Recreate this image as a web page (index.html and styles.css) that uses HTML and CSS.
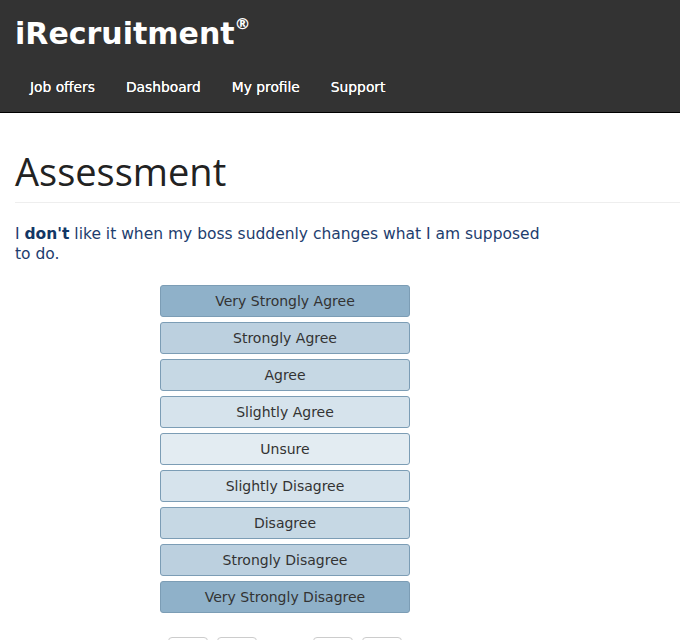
FILE: index.html
```html
<!DOCTYPE html>
<html lang="en">
<head>
  <meta charset="UTF-8">
  <title>iRecruitment - Assessment</title>
  <link rel="stylesheet" href="styles.css">
</head>
<body>
  <div class="header">
    <div class="brand">iRecruitment<sup>&reg;</sup></div>
    <ul class="nav">
      <li>Job offers</li>
      <li>Dashboard</li>
      <li>My profile</li>
      <li>Support</li>
    </ul>
  </div>

  <div class="content">
    <h1>Assessment</h1>

    <p class="question">I <b>don't</b> like it when my boss suddenly changes what I am supposed to do.</p>

    <div class="answers">
      <button class="lvl3">Very Strongly Agree</button>
      <button class="lvl2">Strongly Agree</button>
      <button class="lvl1">Agree</button>
      <button class="lvl0">Slightly Agree</button>
      <button class="mid">Unsure</button>
      <button class="lvl0">Slightly Disagree</button>
      <button class="lvl1">Disagree</button>
      <button class="lvl2">Strongly Disagree</button>
      <button class="lvl3">Very Strongly Disagree</button>
    </div>

    <div class="pager">
      <span class="box"></span>
      <span class="box"></span>
      <span class="space"></span>
      <span class="box"></span>
      <span class="box"></span>
    </div>
  </div>
</body>
</html>
```

FILE: styles.css
```css
body {
  margin: 0;
  font-family: 'DejaVu Sans', Verdana, sans-serif;
  background: #fff;
  color: #333;
}
.header {
  background-color: #333;
  border-bottom: 1px solid #000;
  height: 112px;
  padding: 0 15px;
}
.brand {
  color: #fff;
  font-size: 30px;
  font-weight: bold;
  padding-top: 16px;
  line-height: 36px;
}
.brand sup {
  font-size: 16px;
  vertical-align: top;
  line-height: 20px;
  position: relative;
  top: -2px;
}
.nav {
  list-style: none;
  margin: 0;
  padding: 0;
  display: flex;
  margin-top: 23px;
}
.nav li {
  color: #fff;
  font-size: 13.8px;
  padding: 4px 16px 4px 15px;
  line-height: 16px;
  text-shadow: 0 0 0.4px #fff;
}
.content {
  padding: 0 15px;
}
h1 {
  font-family: 'Open Sans', sans-serif;
  font-weight: 400;
  font-size: 38px;
  line-height: 48px;
  margin: 34px -15px 0 0;
  padding-bottom: 7px;
  border-bottom: 1px solid #eee;
  color: #222;
}
.question {
  color: #1d3d6e;
  font-size: 15.5px;
  line-height: 20px;
  margin: 21px 0 0;
  width: 535px;
}
.question b {
  color: #123766;
}
.answers {
  display: flex;
  flex-direction: column;
  gap: 5px;
  width: 250px;
  margin: 21px 0 0 145px;
}
.answers button {
  font-family: 'DejaVu Sans', Verdana, sans-serif;
  font-size: 14px;
  color: #333;
  height: 32px;
  border: 1px solid #7c9db5;
  border-radius: 3px;
  cursor: pointer;
  padding: 0;
}
.lvl3 { background-color: #8fb1c9; }
.lvl2 { background-color: #bcd0df; }
.lvl1 { background-color: #c6d8e4; }
.lvl0 { background-color: #d6e3ec; }
.mid { background-color: #e3ecf2; }
.pager {
  display: flex;
  gap: 9px;
  margin: 24px 0 0 153px;
}
.box {
  width: 38px;
  height: 30px;
  border: 1px solid #ccc;
  border-radius: 4px;
}
.space {
  width: 38px;
}
```
